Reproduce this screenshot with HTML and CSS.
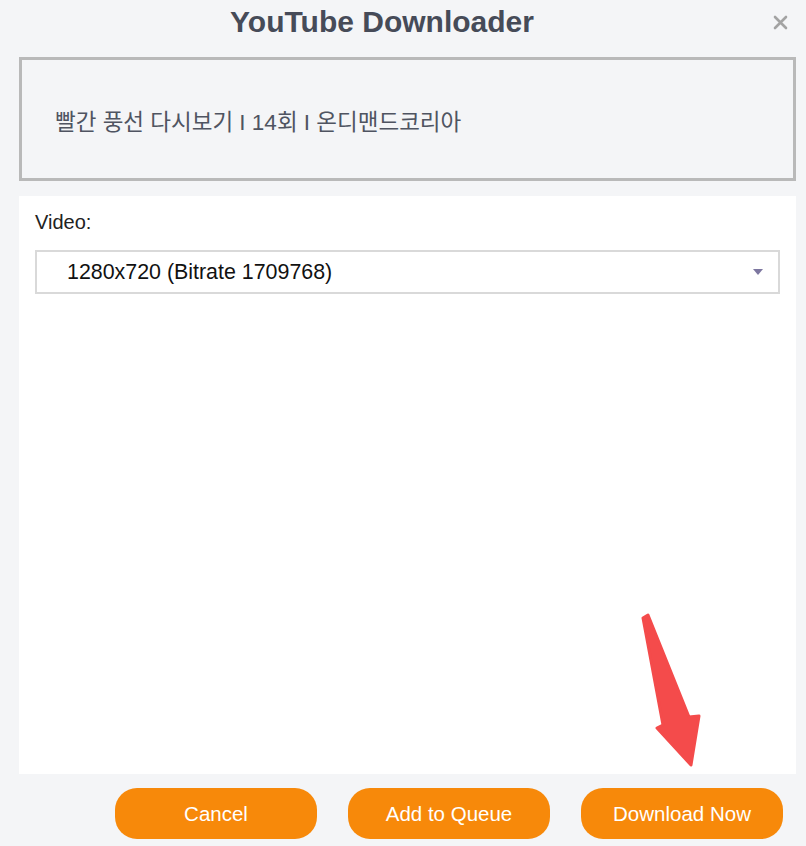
FILE: index.html
```html
<!DOCTYPE html>
<html lang="en">
<head>
    <meta charset="UTF-8">
    <meta name="viewport" content="width=device-width, initial-scale=1.0">
    <title>YouTube Downloader</title>
    <link rel="stylesheet" href="styles.css">
</head>
<body>
    <!-- Header -->
    <div class="header">
        <h1 class="title">YouTube Downloader</h1>
        <button class="close-btn" aria-label="Close">
            <svg width="15" height="15" viewBox="0 0 15 15">
                <path d="M2 2 L13 13 M13 2 L2 13" stroke="#a3a3a3" stroke-width="2.6" stroke-linecap="round"/>
            </svg>
        </button>
    </div>

    <!-- Video title -->
    <div class="video-name">
        <p>빨간 풍선 다시보기 I 14회 I 온디맨드코리아</p>
    </div>

    <!-- Format picker -->
    <div class="panel">
        <label class="field-label">Video:</label>
        <div class="select">
            <span>1280x720 (Bitrate 1709768)</span>
            <span class="caret"></span>
        </div>
    </div>

    <!-- Buttons -->
    <div class="actions">
        <button class="btn">Cancel</button>
        <button class="btn">Add to Queue</button>
        <button class="btn">Download Now</button>
    </div>

    <!-- Annotation arrow -->
    <svg class="pointer" width="80" height="170" viewBox="0 0 80 170">
        <polygon points="13,13 18,10 59,112 69,111 61,160 27,123 33,120" fill="#f44b4b" stroke="#f44b4b" stroke-width="3" stroke-linejoin="round"/>
    </svg>
</body>
</html>
```

FILE: styles.css
```css
* {
    margin: 0;
    padding: 0;
    box-sizing: border-box;
}

body {
    position: relative;
    width: 806px;
    height: 846px;
    padding: 0 10px 0 19px;
    background: #f4f5f7;
    font-family: 'Liberation Sans', Arial, sans-serif;
    overflow: hidden;
}
/* Header */
.header {
    display: flex;
    align-items: center;
    height: 44px;
}
.title {
    flex: 1;
    text-align: center;
    font-size: 30px;
    line-height: 44px;
    font-weight: bold;
    color: #464b58;
}
.close-btn {
    width: 51px;
    height: 44px;
    display: flex;
    align-items: center;
    justify-content: flex-end;
    padding-right: 8px;
    border: none;
    background: none;
    cursor: pointer;
}
/* Video title box */
.video-name {
    margin-top: 13px;
    height: 124px;
    border: 3px solid #b9b9b9;
    display: flex;
    align-items: center;
    padding-left: 33px;
}
.video-name p {
    font-family: 'Liberation Sans', 'Noto Sans CJK KR', sans-serif;
    font-size: 22.5px;
    color: #4f5461;
    padding-top: 2px;
}
/* White panel */
.panel {
    margin-top: 15px;
    height: 578px;
    background: #ffffff;
    padding: 14px 16px 0 16px;
}
.field-label {
    display: block;
    font-size: 20px;
    line-height: 24px;
    color: #222;
    margin-bottom: 16px;
}
.select {
    display: flex;
    align-items: center;
    justify-content: space-between;
    height: 44px;
    border: 2px solid #d9d9d9;
    padding: 0 15px 0 30px;
    font-size: 21.4px;
    color: #111;
}
.caret {
    width: 0;
    height: 0;
    border-left: 5px solid transparent;
    border-right: 5px solid transparent;
    border-top: 6px solid #7d77a0;
}
/* Bottom buttons */
.actions {
    display: flex;
    justify-content: flex-end;
    gap: 31px;
    margin-top: 14px;
    padding-right: 13px;
}
.btn {
    width: 202px;
    height: 51px;
    border: none;
    border-radius: 22px;
    background: #f7890a;
    color: #fff;
    font-family: 'Liberation Sans', Arial, sans-serif;
    font-size: 20.5px;
    cursor: pointer;
}
.btn:hover {
    background: #e67d05;
}
/* Red arrow overlay */
.pointer {
    position: absolute;
    left: 630px;
    top: 605px;
}
```
